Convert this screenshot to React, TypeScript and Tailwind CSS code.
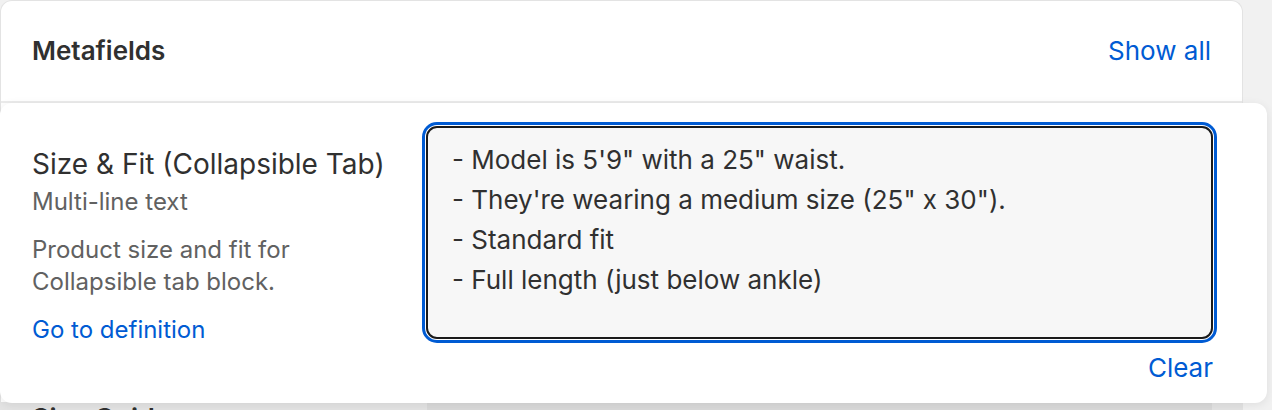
import React from "react";

const font = { fontFamily: "Inter, 'Noto Sans', sans-serif" };

const sizeFitLines = [
  `- Model is 5'9" with a 25" waist.`,
  `- They're wearing a medium size (25" x 30").`,
  "- Standard fit",
  "- Full length (just below ankle)",
];

function MetafieldRow() {
  return (
    <div className="relative z-10 -ml-px -mr-[25px] h-[300px] rounded-[12px] bg-white pl-[32px] pr-[54px] pt-[23px] shadow-[0_2px_10px_rgba(0,0,0,0.08)]">
      <div className="flex">
        {/* Label column */}
        <div className="w-[394px] shrink-0 pt-[22px]">
          <p className="text-[28px] leading-[32px] text-[#303030]">
            Size &amp; Fit (Collapsible Tab)
          </p>
          <p className="mt-[6px] text-[24px] leading-[32px] text-[#616161]">
            Multi-line text
          </p>
          <p className="mt-[16px] text-[24px] leading-[32px] text-[#616161]">
            Product size and fit for
            <br />
            Collapsible tab block.
          </p>
          <a className="mt-[16px] block text-[24px] leading-[32px] text-[#005bd3]">
            Go to definition
          </a>
        </div>

        {/* Focused field */}
        <div className="flex-1">
          <div className="h-[213px] rounded-[11px] border-2 border-[#1a1a1a] bg-[#f7f7f7] px-[24px] pt-[12px] outline outline-[3px] outline-offset-[1px] outline-[#005bd3]">
            {sizeFitLines.map((line) => (
              <p key={line} className="text-[26px] leading-[40px] text-[#303030]">
                {line}
              </p>
            ))}
          </div>
          <div className="mt-[14px] flex justify-end">
            <a className="text-[26px] leading-[30px] text-[#005bd3]">Clear</a>
          </div>
        </div>
      </div>
    </div>
  );
}

export default function App() {
  return (
    <div className="h-[410px] overflow-hidden bg-[#f1f1f1]" style={font}>
      <div className="w-[1243px] rounded-t-[12px] border border-b-0 border-[#e3e3e3] bg-white">
        <div className="flex h-[102px] items-center justify-between border-b-2 border-[#ebebeb] px-[31px] pb-[2px]">
          <h2 className="text-[26px] font-semibold text-[#303030]">Metafields</h2>
          <a className="text-[26px] text-[#005bd3]">Show all</a>
        </div>

        <MetafieldRow />

        {/* Next row, dimmed behind the lifted one */}
        <div className="-mt-px flex h-[120px] bg-[#e3e3e3] pl-[31px] pr-[30px]">
          <div className="w-[395px] shrink-0 pt-[1px]">
            <p className="text-[27px] font-semibold leading-[32px] text-[#303030]">Size Guide</p>
          </div>
          <div className="flex-1 bg-[#d9d9d9]" />
        </div>
      </div>
    </div>
  );
}
